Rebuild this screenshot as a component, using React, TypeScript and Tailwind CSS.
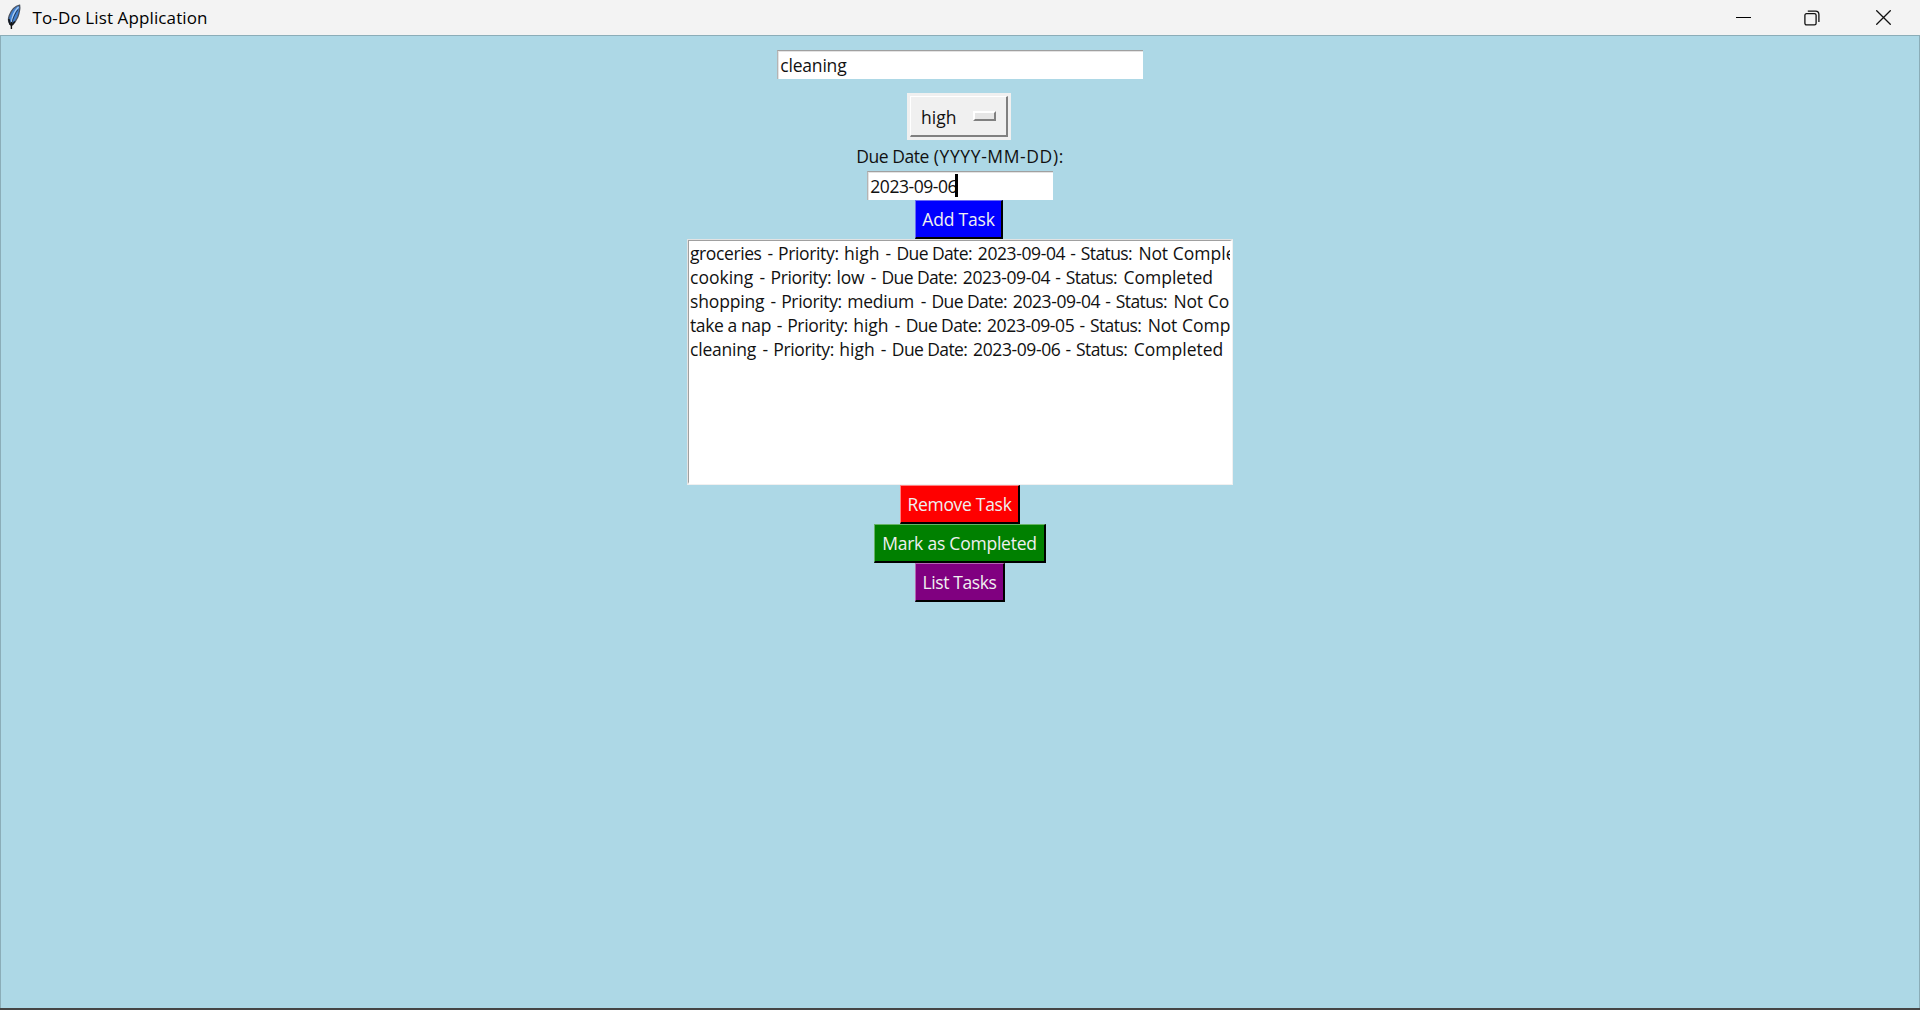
import type { ReactNode } from "react";

type Segment = { text: string; dash?: boolean; cls: string };

const PRIORITY: Segment = { text: "Priority:", cls: "w-[66px] tracking-[-0.35px]" };
const HIGH: Segment = { text: "high", dash: true, cls: "w-[52.5px]" };
const DUE: Segment = { text: "Due Date:", cls: "w-[81.3px] tracking-[-0.6px]" };
const STATUS: Segment = { text: "Status:", cls: "w-[57.7px] tracking-[-0.6px]" };
const NOT: Segment = { text: "Not", cls: "w-[34.3px] tracking-[-0.2px]" };
const DONE: Segment = { text: "Completed", cls: "tracking-[0px]" };
const date = (text: string): Segment => ({ text, dash: true, cls: "w-[103px] tracking-[-0.4px]" });

const TASKS: Segment[][] = [
  [{ text: "groceries", dash: true, cls: "w-[88px] tracking-[-0.4px]" }, PRIORITY, HIGH, DUE, date("2023-09-04"), STATUS, NOT, DONE],
  [
    { text: "cooking", dash: true, cls: "w-[80.5px]" },
    PRIORITY,
    { text: "low", dash: true, cls: "w-[45px] tracking-[-0.2px]" },
    DUE,
    date("2023-09-04"),
    STATUS,
    DONE,
  ],
  [
    { text: "shopping", dash: true, cls: "w-[91.2px] tracking-[-0.15px]" },
    PRIORITY,
    { text: "medium", dash: true, cls: "w-[84.3px] tracking-[-0.2px]" },
    DUE,
    date("2023-09-04"),
    STATUS,
    NOT,
    DONE,
  ],
  [{ text: "take a nap", dash: true, cls: "w-[97.2px] tracking-[-0.4px]" }, PRIORITY, HIGH, DUE, date("2023-09-05"), STATUS, NOT, DONE],
  [{ text: "cleaning", dash: true, cls: "w-[83.3px] tracking-[-0.2px]" }, PRIORITY, HIGH, DUE, date("2023-09-06"), STATUS, DONE],
];

function Feather() {
  return (
    <svg className="ml-[6px] h-[26px] w-[16px]" viewBox="0 0 16 26">
      <path d="M13.6 1.2C9.5 2 5.5 6 3.3 11.5C2.2 14.5 2.3 17.5 3.6 19.5L5.2 21.5C7.8 19.5 10.5 16.5 11.8 13C13.2 9.2 14.2 4.5 13.6 1.2Z" fill="#3f7fd0" stroke="#4a5361" strokeWidth="1.3" />
      <path d="M12.5 3C8.5 7 6 12 5.2 19" fill="none" stroke="#a9cdf3" strokeWidth="1.2" />
      <path d="M12 5.5C9 9.5 6.8 14.5 6 19" fill="none" stroke="#25364c" strokeWidth="0.9" />
      <path d="M2.800 15L4 20L6.5 20.500L8.800 17.500" fill="none" stroke="#14181e" strokeWidth="1.700" />
      <path d="M5.400 18L5.400 25" stroke="#111" strokeWidth="1.400" />
    </svg>
  );
}

function TitleBar() {
  return (
    <header className="flex h-[35px] shrink-0 items-center bg-[#f3f3f3]">
      <div className="flex h-full items-start pt-[4px]">
        <Feather />
      </div>
      <h1 className="ml-[10.5px] flex-1 pt-px text-[17px] leading-[34px] tracking-[0.12px] text-black">To-Do List Application</h1>
      <div className="flex h-[33px] items-center">
        <button className="flex h-full w-[70px] items-center justify-center" aria-label="Minimize">
          <span className="h-px w-[15px] bg-black" />
        </button>
        <button className="flex h-full w-[69px] items-center justify-center pr-px" aria-label="Restore">
          <svg className="h-[16px] w-[16px]" viewBox="0 0 16 16" fill="none" stroke="#111" strokeWidth="1.3">
            <rect x="0.9" y="3.7" width="11.2" height="11.2" rx="1.6" />
            <path d="M3.8 1.1H11.6Q14.9 1.1 14.9 4.4V12" />
          </svg>
        </button>
        <button className="flex h-full w-[73px] items-center justify-center" aria-label="Close">
          <svg className="h-[15px] w-[15px]" viewBox="0 0 15 15" fill="none" stroke="#111" strokeWidth="1.3">
            <path d="M0.3 0.3L14.7 14.7M14.7 0.3L0.3 14.7" />
          </svg>
        </button>
      </div>
    </header>
  );
}

function Entry({ className, children }: { className: string; children: ReactNode }) {
  return (
    <div className={`h-[29px] border-t border-l border-t-[#a0a0a0] border-l-[#b4b4b4] bg-white text-[17.5px] leading-[27px] ${className}`}>
      <div className="flex h-full border-t border-l border-[#e3e3e3] whitespace-nowrap">{children}</div>
    </div>
  );
}

function ActionButton({ className, children }: { className: string; children: ReactNode }) {
  return (
    <button className={`h-[39px] border-t border-l border-r-2 border-b-2 border-r-black border-b-black text-center text-[17.5px] leading-[36px] whitespace-nowrap text-[#f0f0f0] ${className}`}>
      {children}
    </button>
  );
}

function TaskList() {
  return (
    <div className="h-[246px] w-[546px] border border-[#e3e3e3] border-r-[#f0f0f0] border-b-[#f0f0f0] bg-white">
      <div className="h-full border-t border-r-2 border-b-2 border-l border-t-[#a0a0a0] border-r-white border-b-white border-l-[#a0a0a0]">
        <ul className="ml-px overflow-hidden text-[17.5px] leading-[24px] text-[#111]">
          {TASKS.map((row, i) => (
            <li key={i} className="flex h-[24px] whitespace-nowrap">
              {row.map((s, j) => (
                <span key={j} className={`flex shrink-0 justify-between ${s.cls}`}>
                  <span>{s.text}</span>
                  {s.dash && <span className="pr-[5.3px]">-</span>}
                </span>
              ))}
            </li>
          ))}
        </ul>
      </div>
    </div>
  );
}

export default function App() {
  return (
    <div className="flex h-[1010px] w-[1920px] flex-col overflow-hidden border-b-2 border-[#454545] font-['Open_Sans',sans-serif]">
      <TitleBar />
      <main className="flex flex-1 flex-col items-center border border-b-0 border-[#8badb8] bg-[#add8e6] pt-[14px] text-[#111]">
        <Entry className="w-[366px]">
          <span className="pl-[1.3px] tracking-[-0.2px]">cleaning</span>
        </Entry>
        <button className="mt-[14px] mr-[2px] h-[47px] w-[104px] bg-[#f0f0f0] p-[3px]">
          <span className="flex h-full items-center justify-between border-t border-r-2 border-b-2 border-l border-t-white border-r-[#808080] border-b-[#808080] border-l-white pr-[10px] pl-[10px] text-[17.5px] leading-[36px]">
            <span className="pt-[2px]">high</span>
            <span className="mb-px h-[10px] w-[23px] border-2 border-t-white border-r-[#808080] border-b-[#808080] border-l-white bg-[#e6e6e6]" />
          </span>
        </button>
        <label className="flex h-[31px] text-[17.5px] leading-[32px]">
          <span className="w-[77.7px] tracking-[-0.45px]">Due Date</span>
          <span className="tracking-[0.6px]">(YYYY-MM-DD):</span>
        </label>
        <Entry className="w-[186px]">
          <span className="w-[86px] pl-[1.3px] tracking-[-0.45px]">2023-09-06</span>
          <span className="z-10 mt-px h-[23px] w-[3px] bg-black" />
        </Entry>
        <ActionButton className="mr-[2px] w-[88px] border-t-[#6c6cf5] border-l-[#6c6cf5] bg-[#0000ff] tracking-[-0.2px]">Add Task</ActionButton>
        <TaskList />
        <ActionButton className="w-[120px] border-t-[#ff8080] border-l-[#ff8080] bg-[#ff0000] tracking-[-0.3px]">Remove Task</ActionButton>
        <ActionButton className="w-[172px] border-t-[#66b366] border-l-[#66b366] bg-[#008000] tracking-[-0.22px]">Mark as Completed</ActionButton>
        <ActionButton className="w-[90px] border-t-[#b366b3] border-l-[#b366b3] bg-[#800080] tracking-[-0.4px]">List Tasks</ActionButton>
      </main>
    </div>
  );
}
